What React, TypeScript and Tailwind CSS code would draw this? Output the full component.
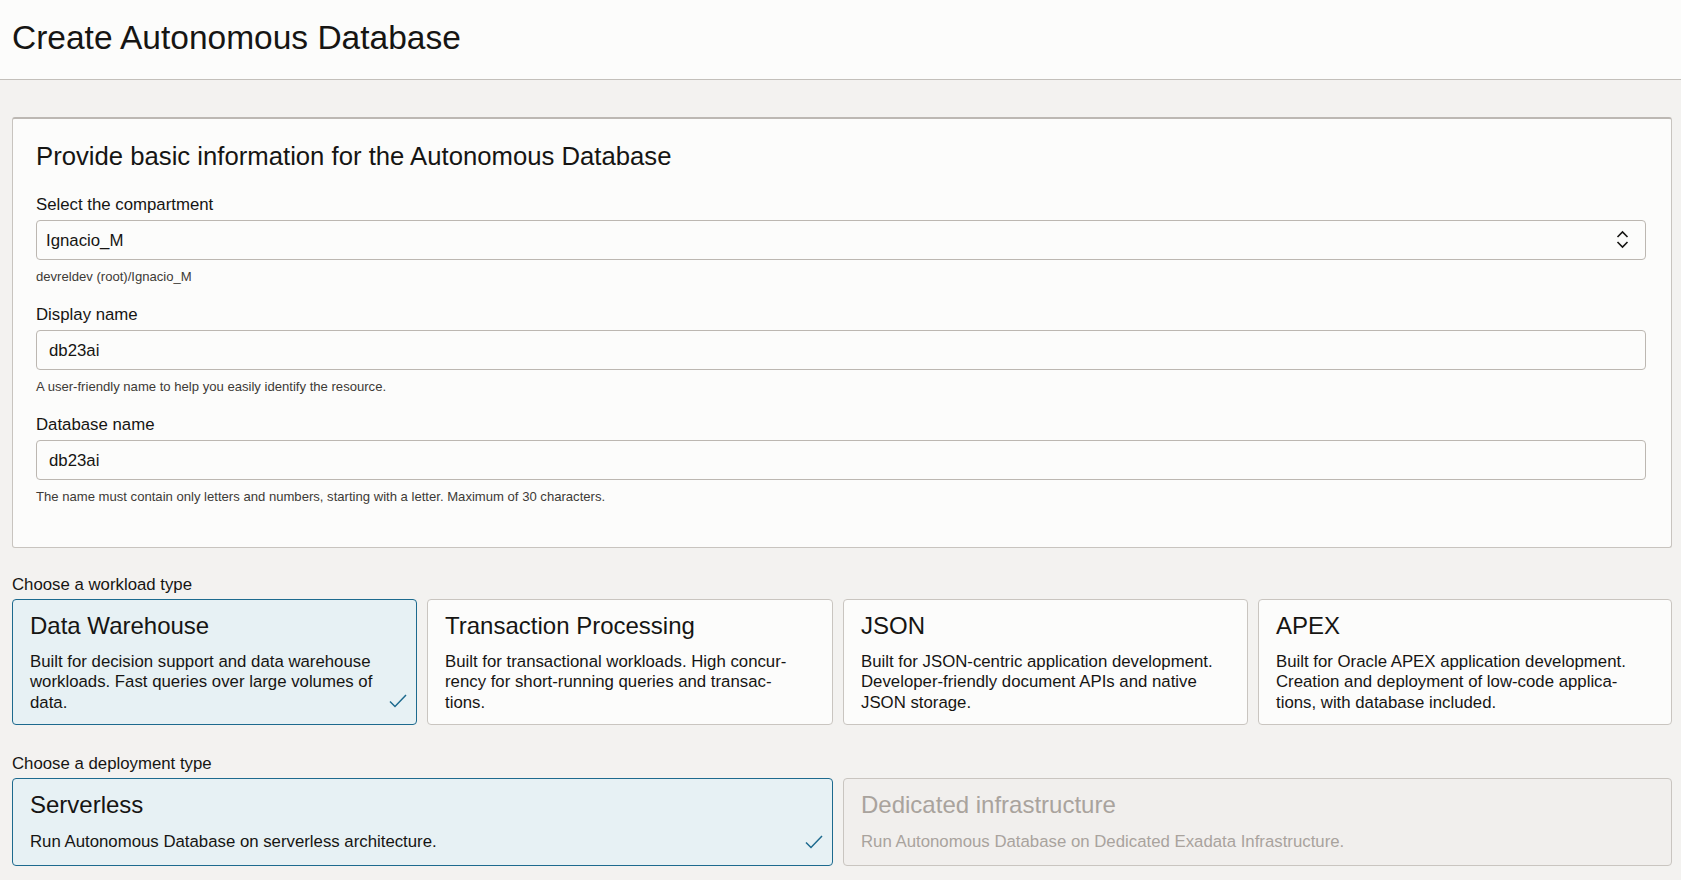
import React from "react";

const font = "font-['Liberation_Sans',Arial,sans-serif]";

type Choice = {
  title: string;
  lines: string[];
  selected?: boolean;
  disabled?: boolean;
};

const workloads: Choice[] = [
  {
    title: "Data Warehouse",
    lines: [
      "Built for decision support and data warehouse",
      "workloads. Fast queries over large volumes of",
      "data.",
    ],
    selected: true,
  },
  {
    title: "Transaction Processing",
    lines: [
      "Built for transactional workloads. High concur-",
      "rency for short-running queries and transac-",
      "tions.",
    ],
  },
  {
    title: "JSON",
    lines: [
      "Built for JSON-centric application development.",
      "Developer-friendly document APIs and native",
      "JSON storage.",
    ],
  },
  {
    title: "APEX",
    lines: [
      "Built for Oracle APEX application development.",
      "Creation and deployment of low-code applica-",
      "tions, with database included.",
    ],
  },
];

const deployments: Choice[] = [
  {
    title: "Serverless",
    lines: ["Run Autonomous Database on serverless architecture."],
    selected: true,
  },
  {
    title: "Dedicated infrastructure",
    lines: ["Run Autonomous Database on Dedicated Exadata Infrastructure."],
    disabled: true,
  },
];

const Check = () => (
  <svg width="18" height="14" viewBox="0 0 18 14" fill="none" className="absolute right-[9px] bottom-[16px]">
    <path d="M1 7.5 L6 12.5 L17 1" stroke="#1d6a8e" strokeWidth="1.5" />
  </svg>
);

const ChoiceCard = ({ c, wide }: { c: Choice; wide?: boolean }) => {
  const tone = c.selected
    ? "bg-[#e7f1f4] border-[#1d6a8e]"
    : c.disabled
    ? "bg-[#f1efed] border-[#c9c5c0] text-[#a9a39d]"
    : "bg-[#fcfcfb] border-[#c9c5c0]";
  return (
    <div className={`relative rounded-[4px] border px-[17px] pt-[14px] pb-[11px] ${wide ? "col-span-2" : ""} ${tone}`}>
      <div className="text-[24px] leading-none">{c.title}</div>
      <p className={`${wide ? "mt-[15px] pb-[1px]" : "mt-[14px]"} text-[16.8px] leading-[20.5px]`}>
        {c.lines.map((l, i) => (
          <React.Fragment key={i}>
            {l}
            {i < c.lines.length - 1 && <br />}
          </React.Fragment>
        ))}
      </p>
      {c.selected && <Check />}
    </div>
  );
};

const Field = ({
  label,
  value,
  help,
  select,
}: {
  label: string;
  value: string;
  help: string;
  select?: boolean;
}) => (
  <div className="flex flex-col">
    <label className="text-[16.8px] leading-[20px]">{label}</label>
    <div
      className={`mt-[5px] flex h-[40px] items-center rounded-[4px] border border-[#bcb7b1] bg-[#fcfcfb] text-[16.8px] ${
        select ? "pl-[9px] pr-[16px]" : "pl-[12px]"
      }`}
    >
      <span className="flex-1 pt-[2px]">{value}</span>
      {select && (
        <svg width="13" height="19" viewBox="0 0 13 19" fill="none">
          <path d="M1.5 7 L6.5 2 L11.5 7" stroke="#161513" strokeWidth="1.6" />
          <path d="M1.5 12 L6.5 17 L11.5 12" stroke="#161513" strokeWidth="1.6" />
        </svg>
      )}
    </div>
    <p className="mt-[9px] text-[13.1px] leading-[16px] text-[#3d3a36]">{help}</p>
  </div>
);

export default function App() {
  return (
    <div className={`min-h-screen bg-[#f3f2f0] text-[#161513] ${font}`}>
      <header className="box-border h-[80px] border-b border-[#c3bfba] bg-[#fcfcfb] px-3 pt-[21px]">
        <h1 className="text-[33.5px] leading-none">Create Autonomous Database</h1>
      </header>

      <main className="pl-3 pr-[9px] pt-[37px]">
        {/* basic info */}
        <section className="rounded-[3px] border border-t-2 border-[#c8c4bf] border-t-[#bcb8b3] bg-[#fcfcfb] pl-[23px] pr-[25px] pt-[25px] pb-[42px]">
          <h2 className="mb-[25px] text-[25.7px] leading-none">
            Provide basic information for the Autonomous Database
          </h2>
          <div className="flex flex-col gap-[20px]">
            <Field
              label="Select the compartment"
              value="Ignacio_M"
              help="devreldev (root)/Ignacio_M"
              select
            />
            <Field
              label="Display name"
              value="db23ai"
              help="A user-friendly name to help you easily identify the resource."
            />
            <Field
              label="Database name"
              value="db23ai"
              help="The name must contain only letters and numbers, starting with a letter. Maximum of 30 characters."
            />
          </div>
        </section>

        <div className="mt-[27px] mb-1 text-[16.8px] leading-[20px]">Choose a workload type</div>
        <div className="grid grid-cols-[405px_406px_405px_1fr] gap-x-[10px]">
          {workloads.map((w) => (
            <ChoiceCard key={w.title} c={w} />
          ))}
        </div>

        <div className="mt-[29px] mb-[4px] text-[16.8px] leading-[20px]">Choose a deployment type</div>
        <div className="grid grid-cols-[405px_406px_405px_1fr] gap-x-[10px]">
          {deployments.map((d) => (
            <ChoiceCard key={d.title} c={d} wide />
          ))}
        </div>
      </main>
    </div>
  );
}
